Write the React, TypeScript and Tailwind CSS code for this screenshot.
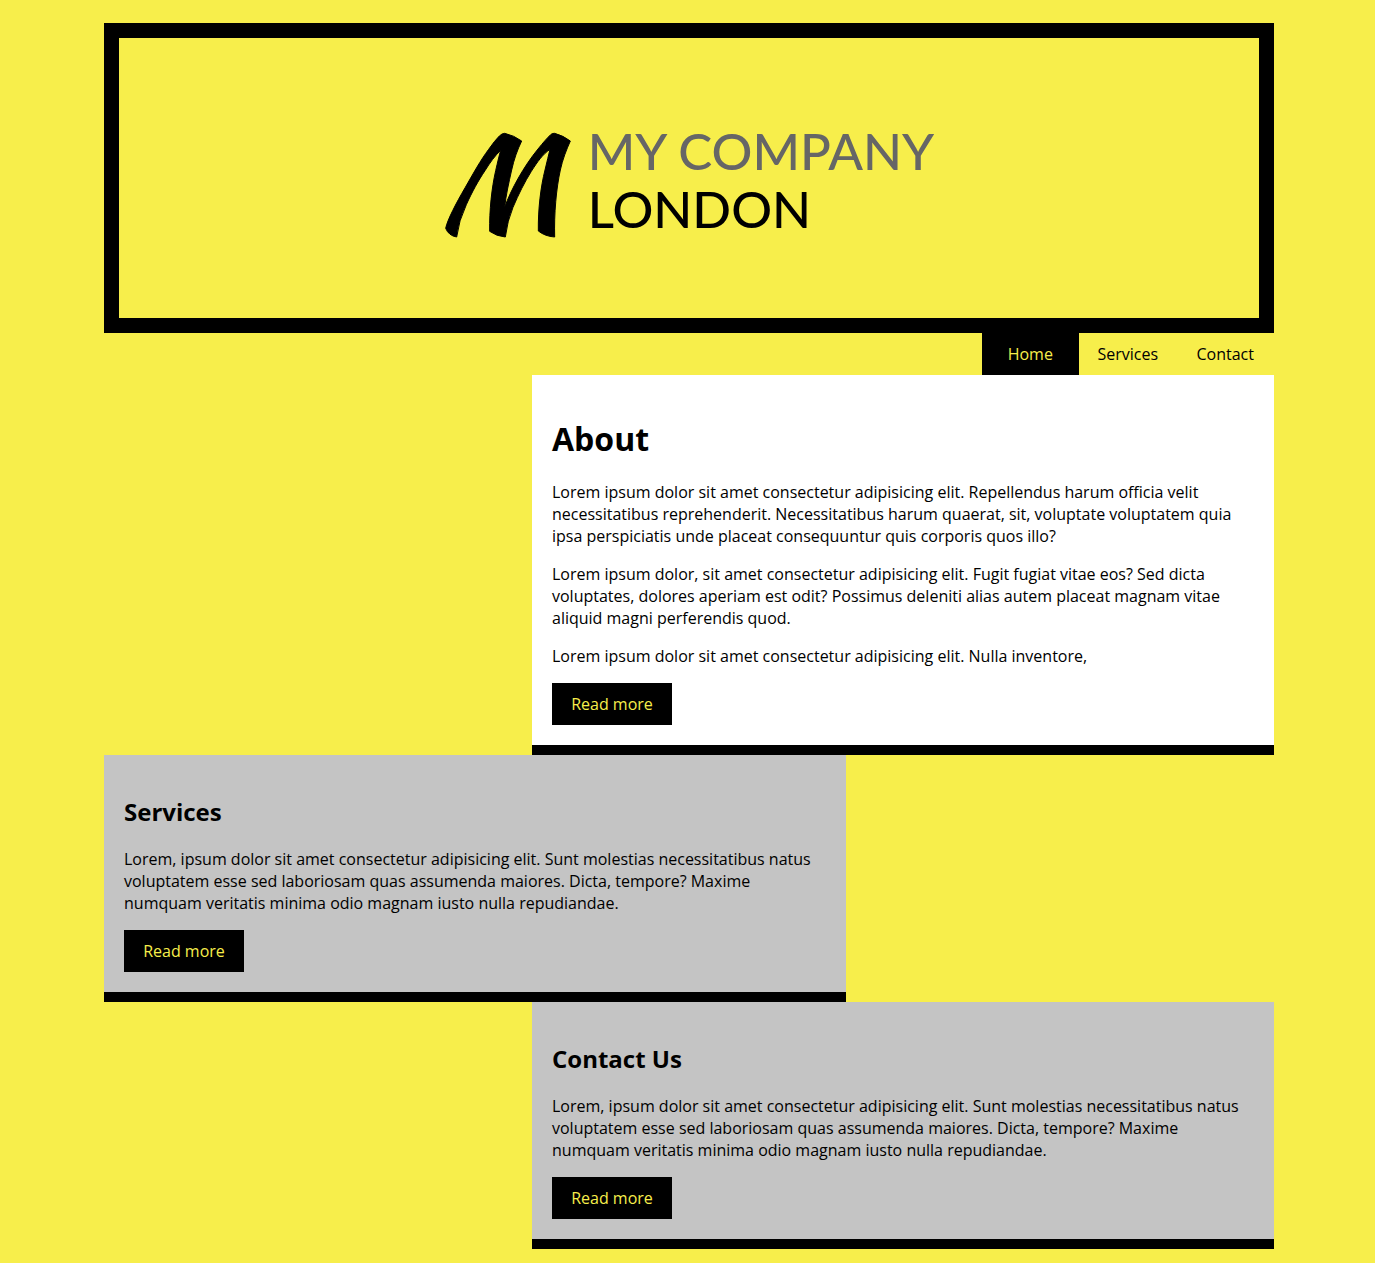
import type { ReactNode } from "react";

function Logo() {
  return (
    <a href="#home" aria-label="My Company London" className="flex items-start gap-4">
      <svg viewBox="40 36 384 321" className="mt-2.5 h-[107px] w-32" aria-hidden="true">
        <path
          stroke="black"
          strokeWidth="3"
          strokeLinejoin="round"
          d="M45 325C50 300 76 250 104 202C128 160 150 120 174 88Q192 62 206 48Q214 40 222 40Q250 46 273 63C260 90 250 118 243 150C234 190 226 225 222 262C240 210 280 138 322 87Q346 57 360 44Q365 39 372 40Q398 47 419 63C407 90 396 118 389 150C377 205 370 280 372 351Q343 349 323 333C322 270 330 200 343 150Q352 112 358 88C335 104 320 126 302 154C282 186 264 222 247 262Q230 302 224 351Q198 349 177 334C176 270 183 205 195 152Q204 112 210 91C192 108 178 128 163 152C144 180 124 216 107 254Q84 302 78 351Q54 347 45 325Z"
        />
      </svg>
      <span className="font-[Lato,sans-serif] text-[51px] leading-[58px] font-medium whitespace-nowrap">
        <span className="block text-[#666666]">MY COMPANY</span>
        <span className="block">LONDON</span>
      </span>
    </a>
  );
}

function NavLink({ href, active, children }: { href: string; active?: boolean; children: ReactNode }) {
  return (
    <a
      href={href}
      aria-current={active ? "page" : undefined}
      className={active ? "bg-black py-2.5 text-center text-[#f7ee4b]" : "py-2.5 text-center"}
    >
      {children}
    </a>
  );
}

function ReadMore({ href }: { href: string }) {
  return (
    <a href={href} className="block w-[120px] bg-black py-2.5 text-center text-[#f7ee4b]">
      Read more
    </a>
  );
}

const filler =
  "Lorem, ipsum dolor sit amet consectetur adipisicing elit. Sunt molestias necessitatibus natus voluptatem esse sed laboriosam quas assumenda maiores. Dicta, tempore? Maxime numquam veritatis minima odio magnam iusto nulla repudiandae.";

export default function App() {
  return (
    <div className="min-h-screen bg-[#f7ee4b] pt-[23px] pr-[101px] pb-3.5 pl-[104px] font-['Open_Sans',sans-serif] text-base leading-[22px] text-black">
      <header>
        <div className="flex h-[310px] items-center justify-center border-[15px] border-black pt-1">
          <Logo />
        </div>
        <nav className="ml-auto grid w-1/4 grid-cols-3">
          <NavLink href="#home" active>Home</NavLink>
          <NavLink href="#services">Services</NavLink>
          <NavLink href="#contact">Contact</NavLink>
        </nav>
      </header>
      <main className="flex flex-col">
        <section id="home" className="flex w-[742px] max-w-full flex-col gap-4 self-end border-b-[10px] border-black bg-white p-5">
          <h1 className="mt-[22px] mb-1 text-[32px] leading-[44px] font-bold">About</h1>
          <p>
            Lorem ipsum dolor sit amet consectetur adipisicing elit. Repellendus harum officia velit necessitatibus
            reprehenderit. Necessitatibus harum quaerat, sit, voluptate voluptatem quia ipsa perspiciatis unde placeat
            consequuntur quis corporis quos illo?
          </p>
          <p>
            Lorem ipsum dolor, sit amet consectetur adipisicing elit. Fugit fugiat vitae eos? Sed dicta voluptates,
            dolores aperiam est odit? Possimus deleniti alias autem placeat magnam vitae aliquid magni perferendis quod.
          </p>
          <p>Lorem ipsum dolor sit amet consectetur adipisicing elit. Nulla inventore,</p>
          <ReadMore href="#about" />
        </section>
        <section id="services" className="flex w-[742px] max-w-full flex-col gap-4 self-start border-b-[10px] border-black bg-[#c4c4c4] p-5">
          <h2 className="mt-5 mb-1 text-2xl leading-[33px] font-bold">Services</h2>
          <p>{filler}</p>
          <ReadMore href="#services" />
        </section>
        <section id="contact" className="flex w-[742px] max-w-full flex-col gap-4 self-end border-b-[10px] border-black bg-[#c4c4c4] p-5">
          <h2 className="mt-5 mb-1 text-2xl leading-[33px] font-bold">Contact Us</h2>
          <p>{filler}</p>
          <ReadMore href="#contact" />
        </section>
      </main>
    </div>
  );
}
